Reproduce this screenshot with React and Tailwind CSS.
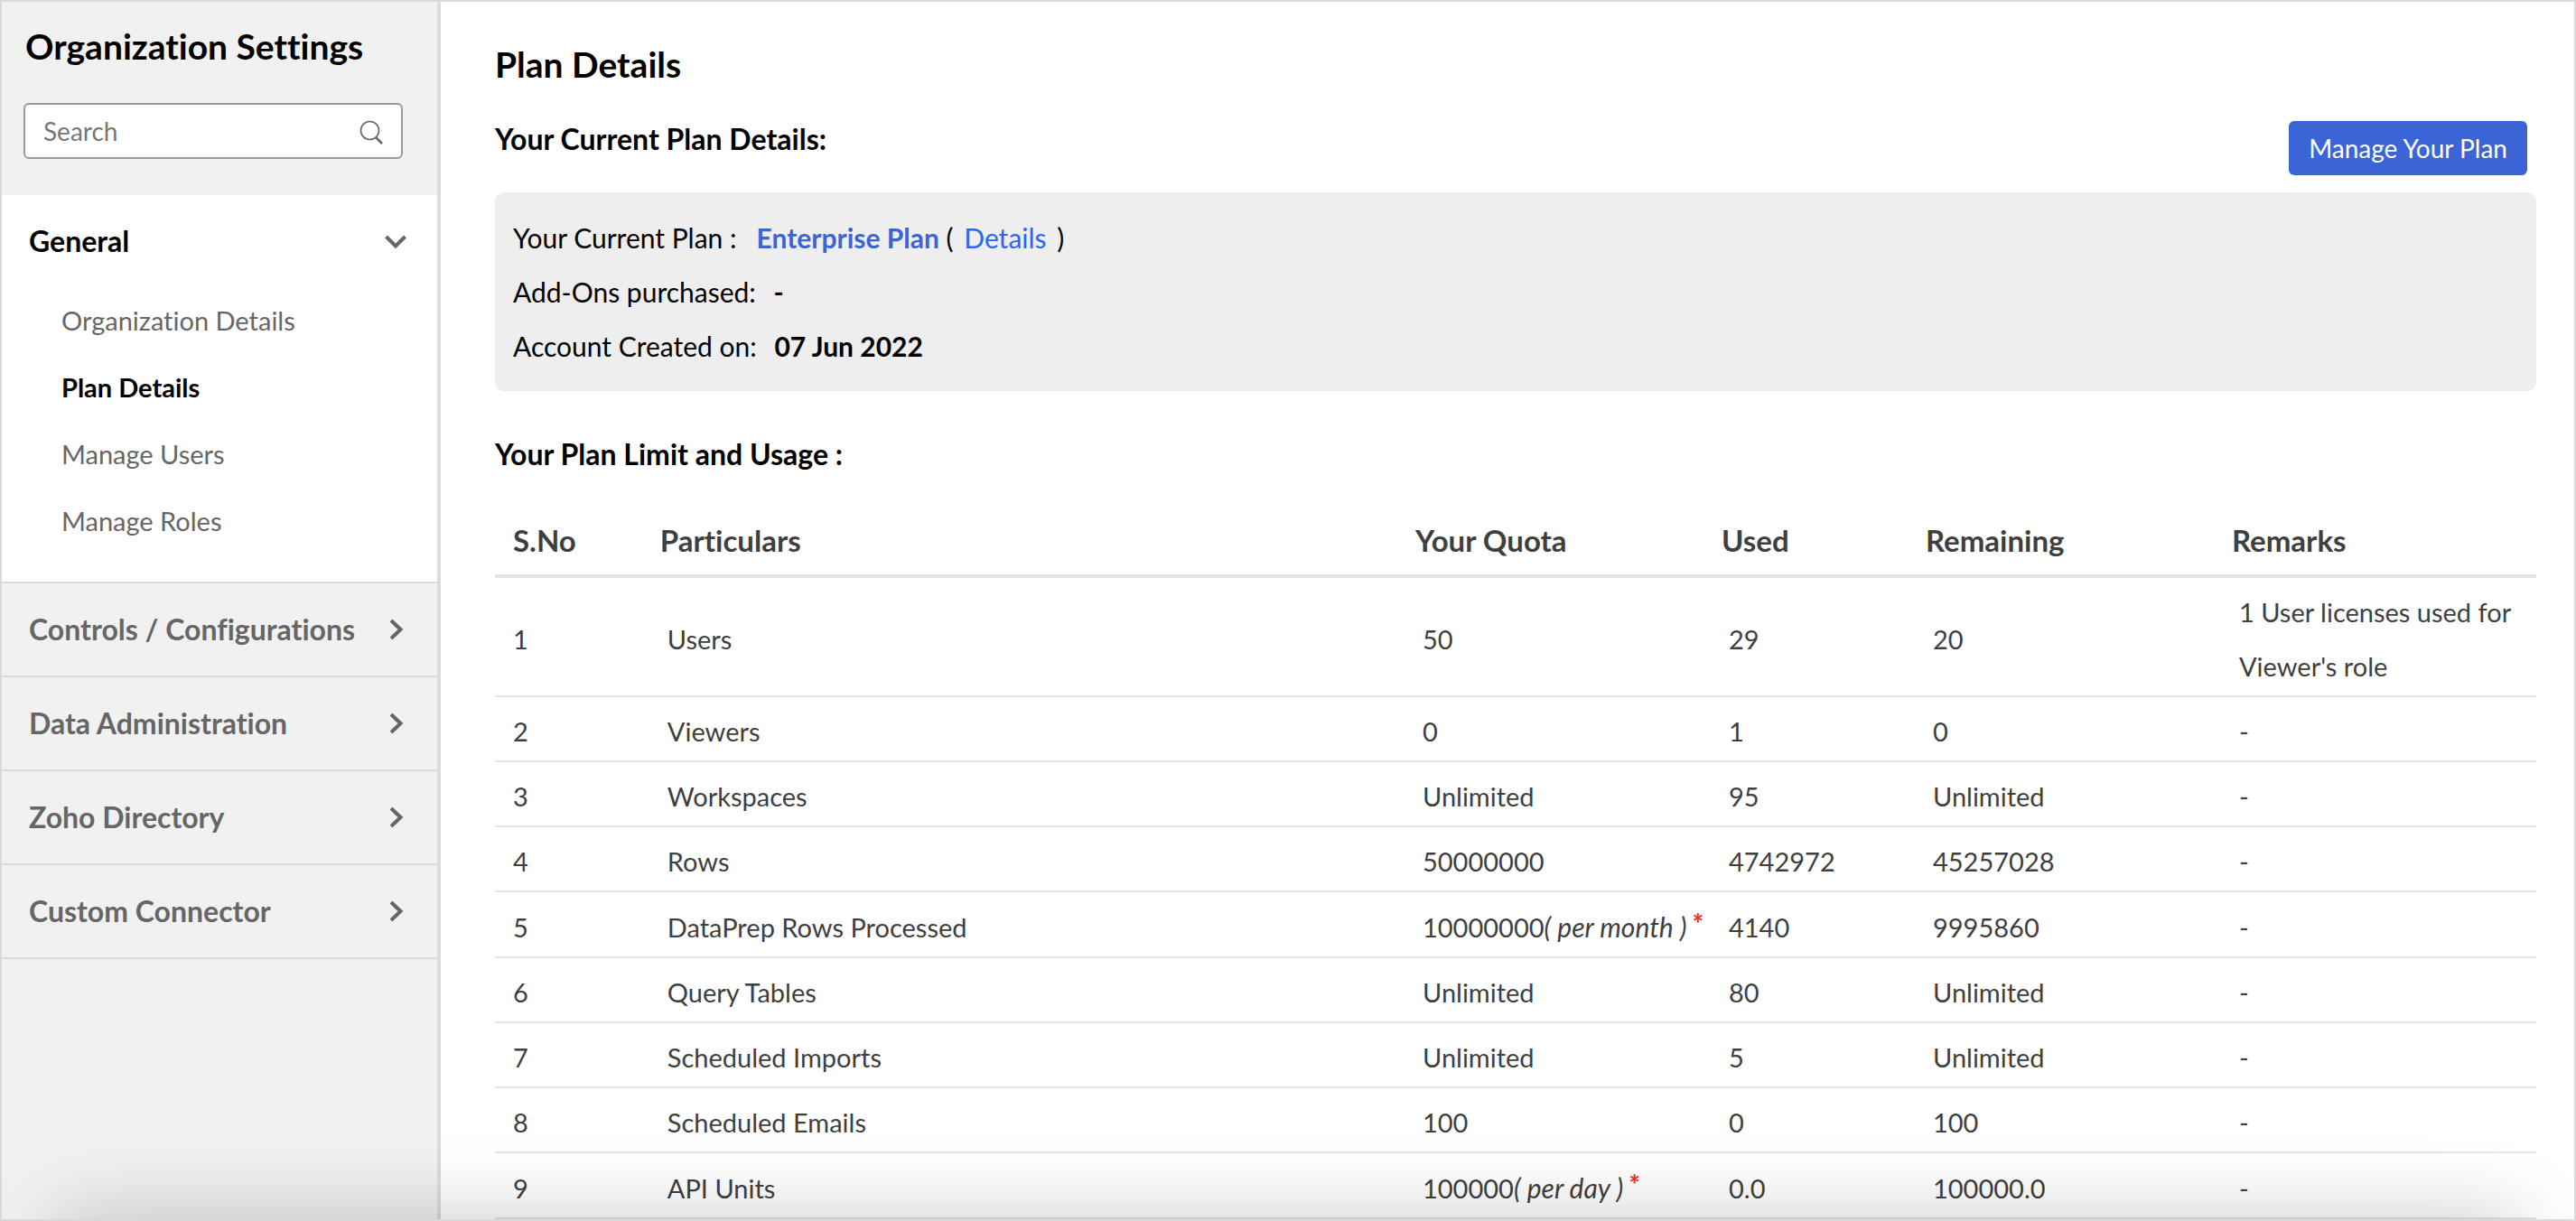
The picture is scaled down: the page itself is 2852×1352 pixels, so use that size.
import {useState} from "react";

const generalLinks = ["Organization Details", "Plan Details", "Manage Users", "Manage Roles"];

const sections = ["Controls / Configurations", "Data Administration", "Zoho Directory", "Custom Connector"];

const columns = [
    {label: "S.No", className: "w-[8%] pl-5"},
    {label: "Particulars", className: "w-[37%] pl-[2px]"},
    {label: "Your Quota", className: "w-[15%] pl-[2px]"},
    {label: "Used", className: "w-[10%] pl-[2px]"},
    {label: "Remaining", className: "w-[15%] pl-[2px]"},
    {label: "Remarks", className: "w-[15%] pl-[2px]"},
];

const usage = [
    {name: "Users", quota: "50", used: "29", remaining: "20", remarks: "1 User licenses used for Viewer's role"},
    {name: "Viewers", quota: "0", used: "1", remaining: "0", remarks: "-"},
    {name: "Workspaces", quota: "Unlimited", used: "95", remaining: "Unlimited", remarks: "-"},
    {name: "Rows", quota: "50000000", used: "4742972", remaining: "45257028", remarks: "-"},
    {name: "DataPrep Rows Processed", quota: "10000000", period: "per month", used: "4140", remaining: "9995860", remarks: "-"},
    {name: "Query Tables", quota: "Unlimited", used: "80", remaining: "Unlimited", remarks: "-"},
    {name: "Scheduled Imports", quota: "Unlimited", used: "5", remaining: "Unlimited", remarks: "-"},
    {name: "Scheduled Emails", quota: "100", used: "0", remaining: "100", remarks: "-"},
    {name: "API Units", quota: "100000", period: "per day", used: "0.0", remaining: "100000.0", remarks: "-"},
];

function Chevron({open}) {
    return (
        <svg className="h-7 w-7 shrink-0" viewBox="0 0 28 28" fill="none" stroke="#666666" strokeWidth="4" aria-hidden="true">
            {open ? <path d="M3.5 9l10.5 10.5l10.5 -10.5"/> : <path d="M9 4l10.5 10l-10.5 10"/>}
        </svg>
    );
}

function Sidebar() {
    const [search, setSearch] = useState("");
    const [active, setActive] = useState("Plan Details");

    return (
        <aside className="w-[486px] shrink-0 border-r-4 border-[#dcdcdc] bg-[#f1f1f1]">
            <div className="px-6 pt-6 pb-10">
                <h1 className="pl-[2px] text-[39px] leading-[50px] font-bold text-black">Organization Settings</h1>
                <div className="relative mt-[38px] w-[420px]">
                    <input
                        type="text"
                        aria-label="Search"
                        placeholder="Search"
                        className="h-[62px] w-full rounded-md border-2 border-[#999999] bg-white pl-5 pr-16 text-[28px] text-[#444444] placeholder-[#777777] focus:outline-none"
                        value={search}
                        onChange={(e) => setSearch(e.target.value)}
                    />
                    <svg className="absolute top-[18px] right-5 h-7 w-7" viewBox="0 0 28 28" fill="none" stroke="#666666" aria-hidden="true">
                        <circle cx="11.5" cy="12.5" r="10" strokeWidth="1.6"/>
                        <path d="M18.5 20.5l6.5 6.5" strokeWidth="2.5"/>
                    </svg>
                </div>
            </div>
            <nav>
                <div className="bg-white pb-[30px]">
                    <button type="button" className="flex h-[102px] w-full items-center justify-between pl-[30px] pr-8 text-[32px] font-bold text-black">
                        General
                        <Chevron open/>
                    </button>
                    <ul>
                        {generalLinks.map((link) => (
                            <li key={link}>
                                <a
                                    href="#"
                                    onClick={() => setActive(link)}
                                    className={`flex h-[74px] items-center pl-[66px] text-[29px] ${link === active ? "font-bold text-black" : "text-[#666666]"}`}
                                >
                                    {link}
                                </a>
                            </li>
                        ))}
                    </ul>
                </div>
                {sections.map((section) => (
                    <button
                        key={section}
                        type="button"
                        className="flex h-[104px] w-full items-center justify-between border-t-2 border-[#dcdcdc] pl-[30px] pr-8 text-[32px] font-bold text-[#666666]"
                    >
                        {section}
                        <Chevron/>
                    </button>
                ))}
                <div className="border-t-2 border-[#dcdcdc]"/>
            </nav>
        </aside>
    );
}

function CurrentPlan() {
    return (
        <div className="mt-[19px] rounded-[10px] bg-[#eeeeee] px-5 py-5 text-[30px] leading-[60px] text-black">
            <p>
                Your Current Plan :
                <b className="ml-[22px] text-[#3b65d6]">Enterprise Plan</b>
                {" ( "}
                <a href="#" className="mx-1 text-[#2c66f6]">Details</a>
                {" )"}
            </p>
            <p>Add-Ons purchased: <b className="ml-3">-</b></p>
            <p>Account Created on: <b className="ml-3">07 Jun 2022</b></p>
        </div>
    );
}

function UsageTable() {
    return (
        <table className="mt-[33px] w-full table-fixed text-left text-[#3f3f3f]">
            <thead>
                <tr className="border-b-4 border-[#e5e5e5] text-[33px] leading-[76px]">
                    {columns.map((col) => (
                        <th key={col.label} className={col.className}>{col.label}</th>
                    ))}
                </tr>
            </thead>
            <tbody className="text-[29px] leading-[60px]">
                {usage.map((row, i) => (
                    <tr key={row.name} className="border-b-2 border-[#e5e5e5]">
                        <td className="pt-2 pb-[2px] pl-5">{i + 1}</td>
                        <td className="pt-2 pb-[2px] pl-[10px]">{row.name}</td>
                        <td className="pt-2 pb-[2px] pl-[10px] whitespace-nowrap">
                            {row.quota}
                            {row.period && (
                                <>
                                    <i className="text-[30px]">( {row.period} )</i>
                                    <sup className="-top-1 ml-1.5 text-[30px] leading-none font-bold text-[#f03020]">*</sup>
                                </>
                            )}
                        </td>
                        <td className="pt-2 pb-[2px] pl-[10px]">{row.used}</td>
                        <td className="pt-2 pb-[2px] pl-[10px]">{row.remaining}</td>
                        <td className="pt-2 pb-[2px] pl-[10px]">{row.remarks}</td>
                    </tr>
                ))}
            </tbody>
        </table>
    );
}

export default function App() {
    return (
        <div className="relative flex h-screen overflow-hidden border-2 border-[#d9d9d9] bg-white font-['Lato',sans-serif] [font-variant-ligatures:no-common-ligatures]">
            <Sidebar/>
            <main className="min-w-0 flex-1 pl-[60px] pr-[42px] pt-[43px]">
                <h2 className="text-[39px] leading-[52px] font-bold text-black">Plan Details</h2>
                <div className="flex items-start justify-between pt-[33px] pr-[10px]">
                    <h3 className="text-[32px] leading-[48px] font-bold text-black">Your Current Plan Details:</h3>
                    <button type="button" className="mt-1 h-[60px] rounded-md bg-[#3b65d6] px-[22px] text-[28px] text-white">
                        Manage Your Plan
                    </button>
                </div>
                <CurrentPlan/>
                <h3 className="mt-[46px] text-[32px] leading-[48px] font-bold text-black">Your Plan Limit and Usage :</h3>
                <UsageTable/>
            </main>
            {/* shadow cast upwards from the bottom edge */}
            <div className="pointer-events-none absolute inset-x-[60px] top-full h-52 shadow-[0_0_90px_rgba(0,0,0,0.22)]"/>
        </div>
    );
}
